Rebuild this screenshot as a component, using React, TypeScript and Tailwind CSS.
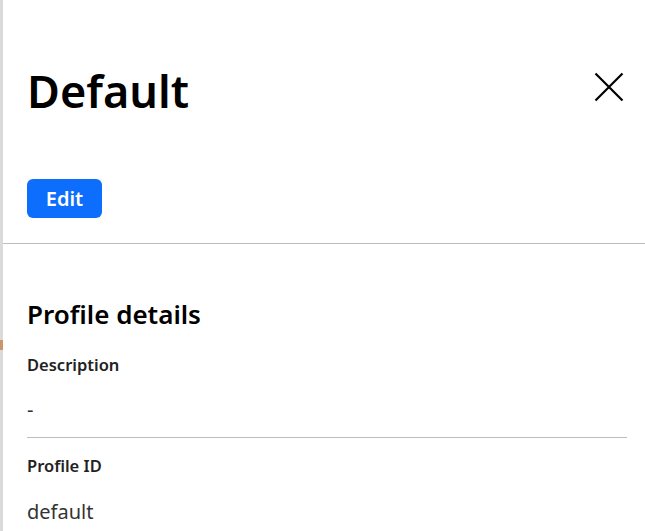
const font = { fontFamily: '"Noto Sans", "Open Sans", sans-serif' };

const App = () => {
  return (
    <div className="flex h-[531px] w-[645px] overflow-hidden bg-white text-black" style={font}>
      {/* page edge behind the panel */}
      <div className="relative w-[3px] shrink-0 bg-[#dadada]">
        <div className="absolute left-0 top-[340px] h-[10px] w-[3px] bg-[#c8966a]" />
      </div>

      <div className="flex flex-1 flex-col">
        {/* Header */}
        <div className="flex items-start justify-between pl-6 pr-[21px] pt-[64px]">
          <h1 className="text-[45px] font-semibold leading-[54px]">Default</h1>
          <button className="mt-[8px] text-black">
            <svg width="30" height="30" viewBox="0 0 30 30" stroke="currentColor" strokeWidth="2.2">
              <path d="M1.5 1.5L28.5 28.5M28.5 1.5L1.5 28.5" />
            </svg>
          </button>
        </div>
        <div className="pl-6 pt-[61px] pb-[25px]">
          <button className="h-[39px] w-[75px] rounded-md bg-[#0d6efd] text-[20px] font-semibold text-white">
            Edit
          </button>
        </div>
        <div className="h-px bg-[#bdbdbd]" />

        {/* Details */}
        <div className="pl-6 pr-[18px] pt-[54px]">
          <h2 className="text-[26px] font-semibold leading-[32px]">Profile details</h2>
          <div className="mt-[24px] text-[16.5px] font-semibold leading-[22px] text-[#222]">
            Description
          </div>
          <div className="mt-[21px] text-[20px] leading-[26px] text-[#333]">-</div>
          <div className="mt-[14px] h-px bg-[#bdbdbd]" />
          <div className="mt-[17px] text-[16.5px] font-semibold leading-[22px] text-[#222]">
            Profile ID
          </div>
          <div className="mt-[22px] text-[20px] leading-[26px] text-[#333]">default</div>
        </div>
      </div>
    </div>
  );
};

export default App;
